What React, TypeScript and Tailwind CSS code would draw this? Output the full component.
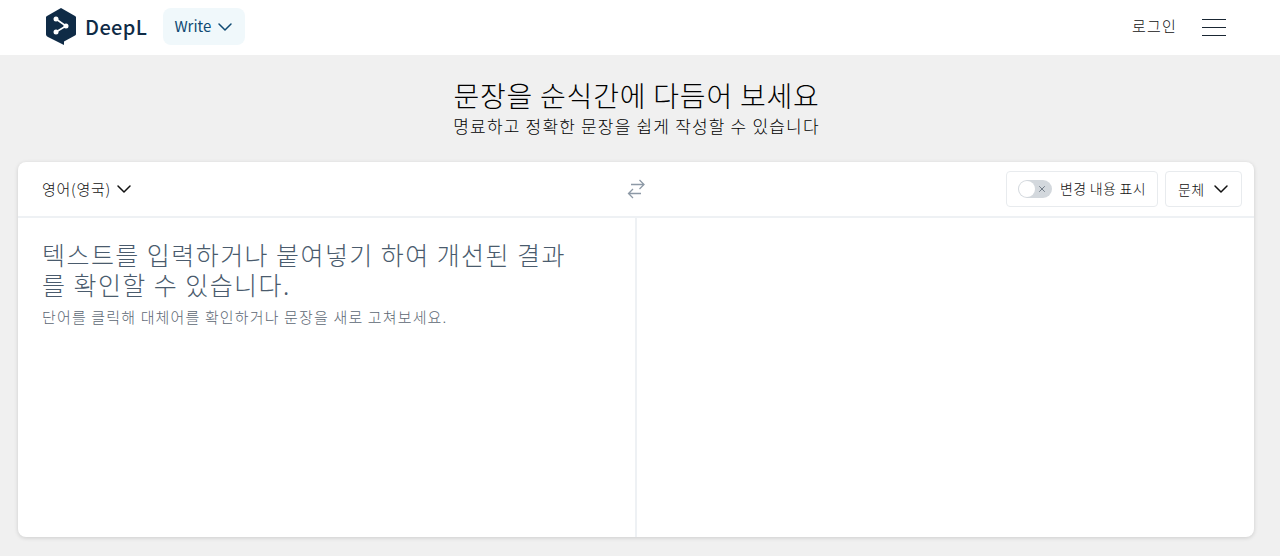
import React from "react";
import { ChevronDown, X } from "lucide-react";

const font = "font-['Noto_Sans_CJK_KR','Noto_Sans',sans-serif]";

const Logo = () => (
  <svg width="30" height="38" viewBox="0 0 30 38" className="shrink-0">
    <path d="M15 0 L29 8 a2 2 0 0 1 1 2 V25.500 a2 2 0 0 1 -1 2 L18 33.500 V37 L2 29 a3 3 0 0 1 -2 -3 V10 a2 2 0 0 1 1 -2 Z" fill="#0f2b46" />
    <path d="M10 11 L20 18 L10 24" fill="none" stroke="#fff" strokeWidth="1.600" />
    <circle cx="10" cy="11" r="2.500" fill="#fff" />
    <circle cx="20" cy="18" r="2.500" fill="#fff" />
    <circle cx="10" cy="24" r="2.500" fill="#fff" />
  </svg>
);

const SwapIcon = () => (
  <svg width="18" height="20" viewBox="0 0 18 20" fill="none" stroke="#8d99a6" strokeWidth="1.300">
    <path d="M4 5.500 H17 M12.500 1 L17 5.500 L12.500 10 M14 14.500 H1.500 M6 10 L1.500 14.500 L6 19" />
  </svg>
);

export default function App() {
  return (
    <div className={`h-[556px] overflow-hidden bg-[#f0f0f0] ${font}`}>
      <header className="flex h-[55px] items-center bg-white pr-[54px] pb-[2px] pl-[46px]">
        <Logo />
        <span className="ml-[9px] text-[20px] font-medium tracking-[0.4px] text-[#0f2b46]">DeepL</span>
        <button className="ml-[16px] flex h-[37px] w-[82px] items-center gap-[2px] rounded-lg bg-[#f0f8fb] pl-[11px] text-[15px] text-[#0f4a73]">
          Write
          <ChevronDown size={24} strokeWidth={1.5} />
        </button>
        <span className="ml-auto text-[15px] font-light tracking-[1.2px] text-[#111]">로그인</span>
        <div className="mt-[2px] ml-[25px] flex w-[24px] flex-col gap-[7px]">
          <span className="h-px bg-[#1a2733]" />
          <span className="h-px bg-[#1a2733]" />
          <span className="h-px bg-[#1a2733]" />
        </div>
      </header>

      <div className="flex flex-col items-center pt-[21px] pr-[7px] text-black">
        <h1 className="text-[28px] leading-[38px] font-light tracking-[0.8px]">문장을 순식간에 다듬어 보세요</h1>
        <p className="text-[17px] leading-[24px] font-light tracking-[1.2px]">명료하고 정확한 문장을 쉽게 작성할 수 있습니다</p>
      </div>

      <main className="mt-[24px] mr-[26px] ml-[18px] h-[375px] overflow-hidden rounded-lg bg-white shadow-[0_1px_4px_rgba(0,0,0,0.15)]">
        <div className="relative flex h-[56px] items-center border-b-2 border-[#eef1f4] pr-[12px] pl-[24px]">
          <button className="flex items-center gap-[1px] text-[15px] font-light tracking-[0.7px] text-[#111]">
            영어(영국)
            <ChevronDown size={24} strokeWidth={1.5} />
          </button>
          <div className="absolute top-[17px] left-[609px]">
            <SwapIcon />
          </div>
          <div className="ml-auto flex items-center gap-[7px]">
            <div className="flex h-[36px] w-[152px] items-center gap-[8px] rounded border border-[#e8ebee] pb-[2px] pl-[11px] text-[14px] font-light tracking-[0.3px] text-[#111]">
              <span className="relative mt-[2px] h-[18px] w-[34px] shrink-0 rounded-full bg-[#d3d8dd]">
                <span className="absolute top-px left-px h-4 w-4 rounded-full bg-white" />
                <X size={10} className="absolute top-1 right-[5px] text-[#5f6b77]" />
              </span>
              변경 내용 표시
            </div>
            <button className="flex h-[36px] w-[77px] items-center gap-[5px] rounded border border-[#e8ebee] pl-[12px] text-[14px] font-light tracking-[0.3px] text-[#111]">
              문체
              <ChevronDown size={24} strokeWidth={1.5} />
            </button>
          </div>
        </div>
        <div className="flex h-[319px]">
          <div className="w-[619px] border-r-2 border-[#eef1f4] pt-[21px] pr-[65px] pl-[24px]">
            <p className="text-[25px] leading-[30px] font-light tracking-[1.45px] text-[#4a5b6d]">텍스트를 입력하거나 붙여넣기 하여 개선된 결과를 확인할 수 있습니다.</p>
            <p className="mt-[8px] text-[15px] leading-[20px] font-light tracking-[1.15px] text-[#5c6773]">단어를 클릭해 대체어를 확인하거나 문장을 새로 고쳐보세요.</p>
          </div>
          <div className="flex-1" />
        </div>
      </main>
    </div>
  );
}
